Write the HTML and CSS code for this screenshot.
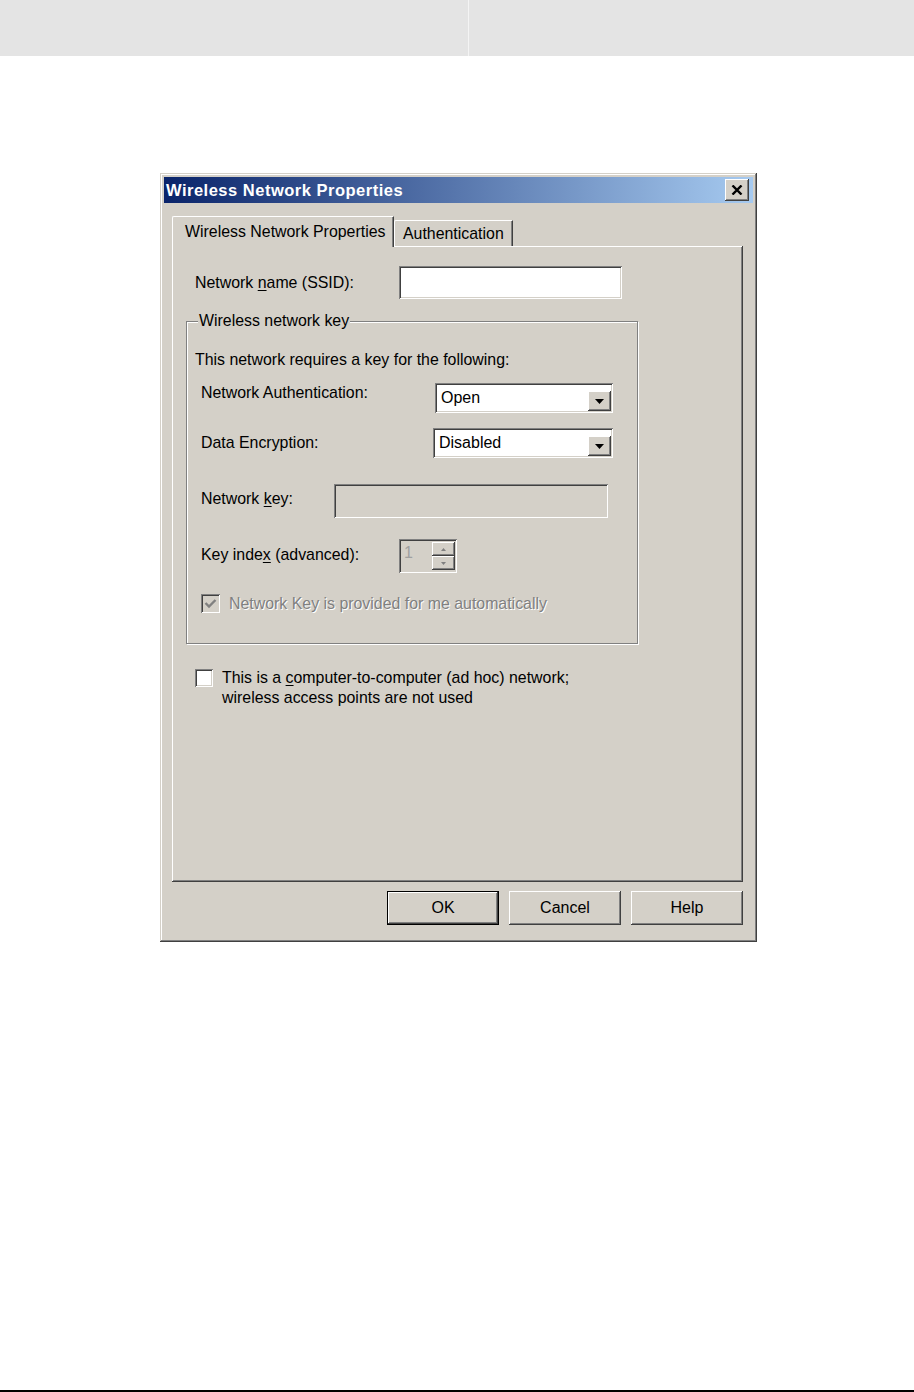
FILE: index.html
```html
<!DOCTYPE html>
<html lang="en">
<head>
    <meta charset="UTF-8">
    <meta name="viewport" content="width=device-width, initial-scale=1.0">
    <title>Wireless Network Properties</title>
    <link rel="stylesheet" href="styles.css">
</head>
<body>
    <div class="topbar">
        <div class="topbar-cell"></div>
        <div class="topbar-cell"></div>
    </div>

    <main class="stage">
        <div class="dialog">
            <div class="titlebar">
                <span class="title">Wireless Network Properties</span>
                <button class="close-btn raised" aria-label="Close">
                    <svg width="12" height="10" viewBox="0 0 12 10"><path d="M1.5 0.5 L10.5 9.5 M10.5 0.5 L1.5 9.5" stroke="#000" stroke-width="2.4" fill="none"/></svg>
                </button>
            </div>

            <div class="tabs">
                <div class="tab tab-active">Wireless Network Properties</div>
                <div class="tab">Authentication</div>
            </div>

            <div class="panel">
                <div class="ssid-row">
                    <label class="ssid-label">Network <u>n</u>ame (SSID):</label>
                    <div class="textbox ssid-box"></div>
                </div>

                <fieldset class="group">
                    <legend>Wireless network key</legend>
                    <p class="intro">This network requires a key for the following:</p>

                    <div class="key-row row-auth">
                        <span class="row-label">Network Authentication:</span>
                        <div class="combo combo-auth">
                            <span class="combo-value">Open</span>
                            <span class="combo-btn raised">
                                <svg width="9" height="5" viewBox="0 0 9 5"><polygon points="0,0 9,0 4.5,5" fill="#000"/></svg>
                            </span>
                        </div>
                    </div>

                    <div class="key-row row-enc">
                        <span class="row-label">Data Encryption:</span>
                        <div class="combo combo-enc">
                            <span class="combo-value">Disabled</span>
                            <span class="combo-btn raised">
                                <svg width="9" height="5" viewBox="0 0 9 5"><polygon points="0,0 9,0 4.5,5" fill="#000"/></svg>
                            </span>
                        </div>
                    </div>

                    <div class="key-row row-key">
                        <span class="row-label">Network <u>k</u>ey:</span>
                        <div class="textbox textbox-disabled key-box"></div>
                    </div>

                    <div class="key-row row-index">
                        <span class="row-label">Key inde<u>x</u> (advanced):</span>
                        <div class="spinner">
                            <span class="spinner-value">1</span>
                            <span class="spinner-btns">
                                <span class="spin-btn raised">
                                    <svg width="5" height="3" viewBox="0 0 5 3"><polygon points="2.5,0 5,3 0,3" fill="#808080"/></svg>
                                </span>
                                <span class="spin-btn raised">
                                    <svg width="5" height="3" viewBox="0 0 5 3"><polygon points="0,0 5,0 2.5,3" fill="#808080"/></svg>
                                </span>
                            </span>
                        </div>
                    </div>

                    <div class="auto-row">
                        <span class="check check-disabled">
                            <svg width="13" height="11" viewBox="0 0 13 11"><path d="M1.5 5 L5 8.5 L11.5 2" stroke="#808080" stroke-width="2.4" fill="none"/></svg>
                        </span>
                        <span class="disabled-text">Network Key is provided for me automatically</span>
                    </div>
                </fieldset>

                <div class="adhoc">
                    <span class="check"></span>
                    <span class="adhoc-text">This is a <u>c</u>omputer-to-computer (ad hoc) network;<br>wireless access points are not used</span>
                </div>
            </div>

            <div class="buttons">
                <button class="btn btn-default">OK</button>
                <button class="btn">Cancel</button>
                <button class="btn">Help</button>
            </div>
        </div>
    </main>

    <div class="footer-rule"></div>
</body>
</html>
```

FILE: styles.css
```css
* {
    box-sizing: border-box;
}
html, body {
    margin: 0;
}
body {
    font-family: "Liberation Sans", Arial, sans-serif;
    font-size: 15.9px;
    color: #000;
    background: #fff;
    min-height: 100vh;
    display: flex;
    flex-direction: column;
}
u {
    text-underline-offset: 2px;
}

/* page chrome */
.topbar {
    height: 56px;
    display: grid;
    grid-template-columns: 468px 1fr;
    background: #e4e4e4;
}
.topbar-cell + .topbar-cell {
    border-left: 1px solid #f4f4f4;
}
.stage {
    padding: 117px 0 0 160px;
}
.footer-rule {
    margin-top: auto;
    height: 2px;
    background: #000;
}

/* win classic bevels */
.raised {
    background: #d4d0c8;
    border: 0;
    box-shadow: inset -1px -1px 0 #404040, inset 1px 1px 0 #fff, inset -2px -2px 0 #808080, inset 2px 2px 0 #d4d0c8;
}
.textbox, .combo, .spinner, .check {
    background: #fff;
    box-shadow: inset 1px 1px 0 #808080, inset -1px -1px 0 #fff, inset 2px 2px 0 #404040, inset -2px -2px 0 #d4d0c8;
}

/* dialog */
.dialog {
    width: 597px;
    height: 769px;
    padding: 4px;
    background: #d4d0c8;
    box-shadow: inset -1px -1px 0 #404040, inset 1px 1px 0 #d4d0c8, inset -2px -2px 0 #808080, inset 2px 2px 0 #fff;
    display: flex;
    flex-direction: column;
}
.titlebar {
    height: 26px;
    display: flex;
    align-items: center;
    justify-content: space-between;
    padding: 0 4px 0 2px;
    background: linear-gradient(to right, #0a246a, #a6caf0);
}
.title {
    color: #fff;
    font-weight: bold;
    font-size: 16.5px;
    letter-spacing: 0.5px;
}
.close-btn {
    width: 24px;
    height: 22px;
    padding: 0;
    display: flex;
    align-items: center;
    justify-content: center;
}

/* tabs */
.tabs {
    display: flex;
    align-items: flex-end;
    margin: 13px 0 -1px 8px;
    height: 31px;
    position: relative;
    z-index: 1;
}
.tab {
    width: 119px;
    height: 26px;
    margin-bottom: 1px;
    padding: 0 0 0 8px;
    display: flex;
    align-items: center;
    white-space: nowrap;
    background: #d4d0c8;
    border-top: 1px solid #fff;
    border-left: 1px solid #fff;
    border-right: 1px solid #404040;
    border-top-left-radius: 2px;
    box-shadow: inset -1px 0 0 #808080;
}
.tab-active {
    width: 222px;
    height: 31px;
    margin-bottom: 0;
    padding-left: 12px;
}

/* panel */
.panel {
    margin-left: 8px;
    width: 571px;
    height: 636px;
    background: #d4d0c8;
    box-shadow: inset -1px -1px 0 #404040, inset 1px 1px 0 #fff, inset -2px -2px 0 #808080;
    display: flex;
    flex-direction: column;
}
.ssid-row {
    display: flex;
    align-items: center;
    margin: 20px 0 0 23px;
}
.ssid-label {
    width: 204px;
}
.ssid-box {
    width: 223px;
    height: 33px;
}

/* group box */
.group {
    margin: 13px 0 0 14px;
    width: 452px;
    min-width: 0;
    padding: 0 0 30px 0;
    border: 1px solid #808080;
    box-shadow: inset 1px 1px 0 #fff, 1px 1px 0 #fff;
}
.group legend {
    margin-left: 11px;
    padding: 0 1px;
    line-height: 18px;
    background: #d4d0c8;
}
.intro {
    margin: 21px 0 0 8px;
    line-height: 18px;
}
.key-row {
    display: flex;
    align-items: center;
    margin-left: 14px;
}
.row-label {
    line-height: 18px;
}
.row-auth {
    margin-top: 14px;
    align-items: flex-start;
}
.row-auth .row-label {
    width: 234px;
    margin-top: 1px;
}
.row-enc {
    margin-top: 15px;
}
.row-enc .row-label {
    width: 232px;
}
.row-key {
    margin-top: 26px;
}
.row-key .row-label {
    width: 133px;
    margin-top: -4px;
}
.row-index {
    margin-top: 21px;
}
.row-index .row-label {
    width: 198px;
    margin-top: -2px;
}

/* combo boxes */
.combo {
    height: 30px;
    display: flex;
    align-items: flex-end;
    justify-content: space-between;
    padding: 2px;
}
.combo-auth {
    width: 178px;
}
.combo-enc {
    width: 180px;
}
.combo-value {
    align-self: center;
    padding-left: 4px;
    font-size: 16px;
}
.combo-btn {
    width: 23px;
    height: 20px;
    display: flex;
    align-items: center;
    justify-content: center;
}
.textbox-disabled {
    background: #d4d0c8;
}
.key-box {
    width: 274px;
    height: 34px;
}

/* spinner */
.spinner {
    width: 58px;
    height: 34px;
    background: #d4d0c8;
    display: flex;
    justify-content: space-between;
    padding: 3px 2px 3px 5px;
}
.spinner-value {
    color: #a0a0a0;
    font-size: 16px;
    line-height: 22px;
}
.spinner-btns {
    width: 23px;
    display: flex;
    flex-direction: column;
}
.spin-btn {
    flex: 1;
    display: flex;
    align-items: center;
    justify-content: center;
}

/* checkboxes */
.auto-row {
    display: flex;
    align-items: center;
    gap: 9px;
    margin: 21px 0 0 14px;
}
.check {
    width: 18px;
    height: 18px;
    flex: none;
    display: flex;
    align-items: center;
    justify-content: center;
}
.check-disabled {
    width: 19px;
    height: 19px;
    background: #d4d0c8;
}
.disabled-text {
    color: #808080;
    text-shadow: 1px 1px 0 #fff;
}
.adhoc {
    display: flex;
    align-items: flex-start;
    gap: 9px;
    margin: 25px 0 0 23px;
}
.adhoc-text {
    line-height: 20px;
    margin-top: -1px;
}

/* buttons */
.buttons {
    display: flex;
    justify-content: flex-end;
    gap: 10px;
    width: 571px;
    margin: 9px 0 0 8px;
}
.btn {
    width: 112px;
    height: 34px;
    padding: 0;
    font-family: inherit;
    font-size: 16px;
    color: #000;
    background: #d4d0c8;
    border: 0;
    box-shadow: inset -1px -1px 0 #404040, inset 1px 1px 0 #fff, inset -2px -2px 0 #808080, inset 2px 2px 0 #d4d0c8;
}
.btn-default {
    border: 1px solid #000;
}
```
